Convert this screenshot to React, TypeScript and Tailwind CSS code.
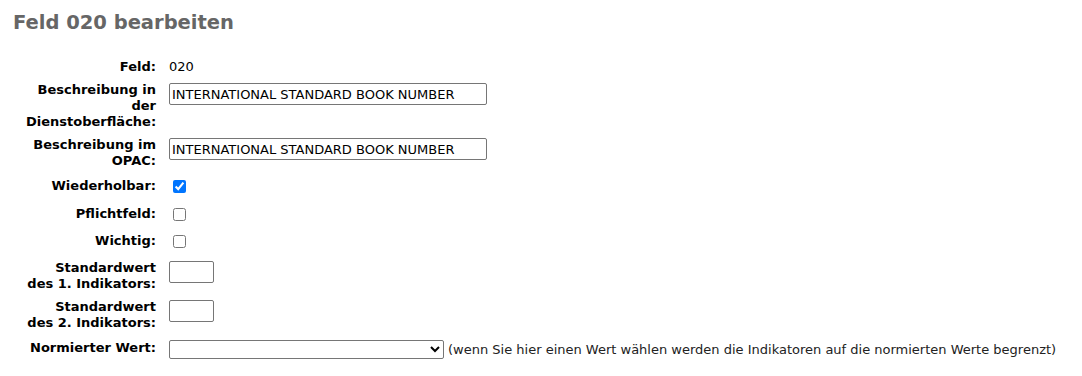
import type { JSX, ReactNode } from "react";

const font = "font-['DejaVu_Sans',sans-serif]";

const textInput =
  "h-[22px] rounded-[2px] border border-[#767676] bg-white px-[2px] text-[13px] text-black outline-none";

function Row({ label, children, pad, offset }: { label: ReactNode; children: ReactNode; pad: string; offset: string }): JSX.Element {
  return (
    <li className={`flex items-start ${pad}`}>
      <label className="mr-[13px] w-[130px] shrink-0 text-right text-[13px] font-bold leading-[16px] text-black">{label}</label>
      <div className={`flex items-start ${offset}`}>{children}</div>
    </li>
  );
}

export default function App(): JSX.Element {
  const box = "m-[3px_3px_3px_4px] h-[13px] w-[13px]";
  return (
    <div className={`${font} bg-white px-[13px] pt-[11px] text-[13px] text-black`} style={{ minHeight: 376 }}>
      <h1 className="text-[19.5px] font-bold leading-[24px] text-[#666666]">Feld 020 bearbeiten</h1>
      <ol className="mt-[24px] pl-[13px]">
        <Row label="Feld:" pad="pb-[7px]" offset="">
          <span className="leading-[16px]">020</span>
        </Row>
        <Row label={<>Beschreibung in der Dienstoberfläche:</>} pad="pb-[7px]" offset="mt-[1px]">
          <input className={`${textInput} w-[318px]`} defaultValue="INTERNATIONAL STANDARD BOOK NUMBER" />
        </Row>
        <Row label="Beschreibung im OPAC:" pad="pb-[9px]" offset="mt-[1px]">
          <input className={`${textInput} w-[318px]`} defaultValue="INTERNATIONAL STANDARD BOOK NUMBER" />
        </Row>
        <Row label="Wiederholbar:" pad="pb-[10px]" offset="-mt-[1px]">
          <input type="checkbox" defaultChecked className={box} />
        </Row>
        <Row label="Pflichtfeld:" pad="pb-[9px]" offset="-mt-[1px]">
          <input type="checkbox" className={box} />
        </Row>
        <Row label="Wichtig:" pad="pb-[9px]" offset="-mt-[1px]">
          <input type="checkbox" className={box} />
        </Row>
        <Row label={<>Standardwert<br />des 1. Indikators:</>} pad="pb-[7px]" offset="mt-[1px]">
          <input className={`${textInput} w-[45px]`} />
        </Row>
        <Row label={<>Standardwert<br />des 2. Indikators:</>} pad="pb-[9px]" offset="mt-[1px]">
          <input className={`${textInput} w-[45px]`} />
        </Row>
        <Row label="Normierter Wert:" pad="pb-[7px]" offset="">
          <select className="h-[19px] w-[275px] rounded-[2px] border border-[#767676] bg-white text-[13px] text-black">
            <option value=""></option>
          </select>
          <span className="ml-[4px] leading-[19px] text-[#222]">
            (wenn Sie hier einen Wert wählen werden die Indikatoren auf die normierten Werte begrenzt)
          </span>
        </Row>
      </ol>
    </div>
  );
}
